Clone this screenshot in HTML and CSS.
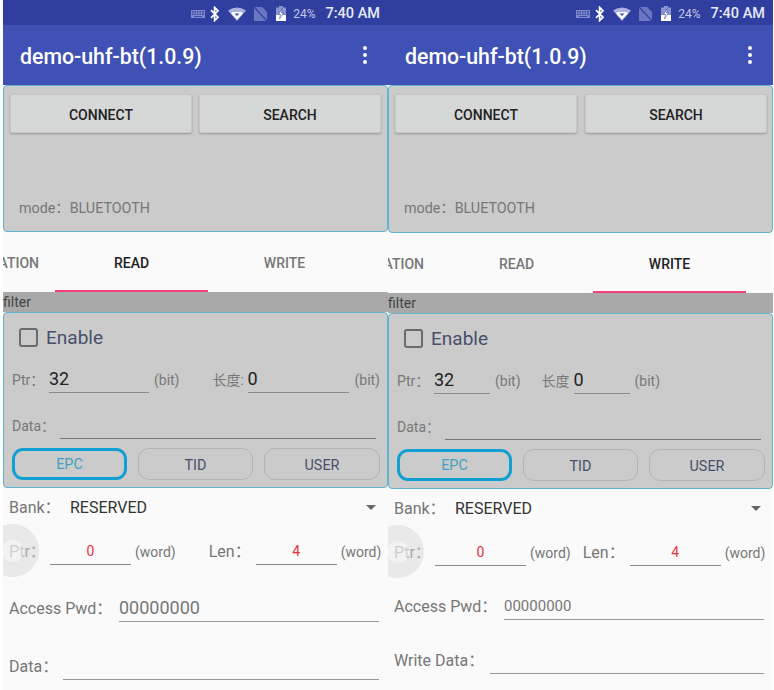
FILE: index.html
```html
<!DOCTYPE html>
<html lang="en">
<head>
  <meta charset="UTF-8" />
  <title>demo-uhf-bt</title>
  <link rel="stylesheet" href="styles.css">
</head>
<body>
  <svg class="defs" width="0" height="0">
    <symbol id="i-kb" viewBox="0 0 14 8"><path d="M0 0h14v8H0z" fill="#7f8bc9"/><path d="M1 1h1.5v1.5H1zM3.5 1H5v1.5H3.5zM6 1h1.5v1.5H6zM8.5 1H10v1.5H8.5zM11 1h2v1.5h-2zM1 3.5h1.5V5H1zM3.5 3.5H5V5H3.5zM6 3.5h1.5V5H6zM8.5 3.5H10V5H8.5zM11 3.5h2V5h-2zM3 6h8v1H3z" fill="#3c49a8"/></symbol>
    <symbol id="i-bt" viewBox="0 0 10 16"><path d="M1 4.2l7 7-3.4 3.4V1.4L8 4.8l-7 7" fill="none" stroke="#fff" stroke-width="1.7"/></symbol>
    <symbol id="i-wifi" viewBox="0 0 18 14"><path d="M0 3.5Q9-2.5 18 3.5L9 14z" fill="#a9b2e0"/><path d="M4.5 5h9l1.4 1.6L9 12.5 3.1 6.6z" fill="#fff"/><path d="M6.5 6.5h5L9 9z" fill="#3c49a8"/></symbol>
    <symbol id="i-sim" viewBox="0 0 13 14"><path d="M0 0h8l5 5v9H0z" fill="#6b77c2"/><path d="M0 0l13 14" stroke="#35429f" stroke-width="1.4"/></symbol>
    <symbol id="i-bat" viewBox="0 0 10 15"><path d="M3 0h4v1.5h3V15H0V1.5h3z" fill="#8a94d0"/><path d="M0 9h10v6H0z" fill="#fff"/><path d="M6 2.5L2.5 8.5h2L3.5 13 7.5 7h-2z" fill="#fff" stroke="#303e9f" stroke-width=".5"/></symbol>
  </svg>

  <section class="screen screen-read">
    <div class="status-bar">
      <svg class="ic-kb"><use href="#i-kb"/></svg>
      <svg class="ic-bt"><use href="#i-bt"/></svg>
      <svg class="ic-wifi"><use href="#i-wifi"/></svg>
      <svg class="ic-sim"><use href="#i-sim"/></svg>
      <svg class="ic-bat"><use href="#i-bat"/></svg>
      <span class="battery">24%</span>
      <span class="clock">7:40 AM</span>
    </div>
    <header class="app-bar">
      <h1>demo-uhf-bt(1.0.9)</h1>
      <div class="more"><i></i><i></i><i></i></div>
    </header>
    <div class="panel top-panel">
      <div class="raised-row">
        <button class="raised">CONNECT</button>
        <button class="raised">SEARCH</button>
      </div>
      <div class="mode">mode：BLUETOOTH</div>
    </div>
    <nav class="tabs">
      <div class="tab tab-cut"><span>ATION</span></div>
      <div class="tab active">READ</div>
      <div class="tab">WRITE</div>
    </nav>
    <div class="filter-title">filter</div>
    <div class="panel filter-panel">
      <label class="enable"><span class="check"></span>Enable</label>
      <div class="bit-row">
        <span class="lbl lbl-ptr">Ptr：</span>
        <span class="bit-input">32</span>
        <span class="unit">(bit)</span>
        <span class="lbl lbl-len">长度:</span>
        <span class="bit-input">0</span>
        <span class="unit">(bit)</span>
      </div>
      <div class="data-row">
        <span class="lbl">Data：</span>
        <span class="line"></span>
      </div>
      <div class="pill-row">
        <button class="pill selected">EPC</button>
        <button class="pill">TID</button>
        <button class="pill">USER</button>
      </div>
    </div>
    <div class="bank-row">
      <span class="field-lbl bank-lbl">Bank：</span>
      <span class="bank-value">RESERVED</span>
      <span class="arrow"></span>
    </div>
    <div class="word-row">
      <span class="field-lbl ptr-lbl">Ptr：</span>
      <span class="word-input">0</span>
      <span class="word-unit">(word)</span>
      <span class="field-lbl len-lbl">Len：</span>
      <span class="word-input">4</span>
      <span class="word-unit">(word)</span>
    </div>
    <div class="pwd-row">
      <span class="field-lbl">Access Pwd：</span>
      <span class="pwd-value">00000000</span>
    </div>
    <div class="last-row">
      <span class="field-lbl">Data：</span>
      <span class="line"></span>
    </div>
    <div class="ripple"><div class="ripple-core"></div></div>
  </section>

  <section class="screen screen-write">
    <div class="status-bar">
      <svg class="ic-kb"><use href="#i-kb"/></svg>
      <svg class="ic-bt"><use href="#i-bt"/></svg>
      <svg class="ic-wifi"><use href="#i-wifi"/></svg>
      <svg class="ic-sim"><use href="#i-sim"/></svg>
      <svg class="ic-bat"><use href="#i-bat"/></svg>
      <span class="battery">24%</span>
      <span class="clock">7:40 AM</span>
    </div>
    <header class="app-bar">
      <h1>demo-uhf-bt(1.0.9)</h1>
      <div class="more"><i></i><i></i><i></i></div>
    </header>
    <div class="panel top-panel">
      <div class="raised-row">
        <button class="raised">CONNECT</button>
        <button class="raised">SEARCH</button>
      </div>
      <div class="mode">mode：BLUETOOTH</div>
    </div>
    <nav class="tabs">
      <div class="tab tab-cut"><span>ATION</span></div>
      <div class="tab">READ</div>
      <div class="tab active">WRITE</div>
    </nav>
    <div class="filter-title">filter</div>
    <div class="panel filter-panel">
      <label class="enable"><span class="check"></span>Enable</label>
      <div class="bit-row">
        <span class="lbl lbl-ptr">Ptr：</span>
        <span class="bit-input">32</span>
        <span class="unit">(bit)</span>
        <span class="lbl lbl-len">长度</span>
        <span class="bit-input">0</span>
        <span class="unit">(bit)</span>
      </div>
      <div class="data-row">
        <span class="lbl">Data：</span>
        <span class="line"></span>
      </div>
      <div class="pill-row">
        <button class="pill selected">EPC</button>
        <button class="pill">TID</button>
        <button class="pill">USER</button>
      </div>
    </div>
    <div class="bank-row">
      <span class="field-lbl bank-lbl">Bank：</span>
      <span class="bank-value">RESERVED</span>
      <span class="arrow"></span>
    </div>
    <div class="word-row">
      <span class="field-lbl ptr-lbl">Ptr：</span>
      <span class="word-input">0</span>
      <span class="word-unit">(word)</span>
      <span class="field-lbl len-lbl">Len：</span>
      <span class="word-input">4</span>
      <span class="word-unit">(word)</span>
    </div>
    <div class="pwd-row">
      <span class="field-lbl">Access Pwd：</span>
      <span class="pwd-value">00000000</span>
    </div>
    <div class="last-row">
      <span class="field-lbl">Write Data：</span>
      <span class="line"></span>
    </div>
    <div class="ripple"><div class="ripple-core"></div></div>
  </section>
</body>
</html>
```

FILE: styles.css
```css
* {
  box-sizing: border-box;
}

html, body {
  height: 690px;
  overflow: hidden;
}

body {
  margin: 0;
  padding-left: 3px;
  background: #fff;
  display: flex;
  font-family: Roboto, "Noto Sans CJK SC", sans-serif;
}

.defs {
  position: absolute;
}

.screen {
  position: relative;
  width: 385px;
  height: 690px;
  overflow: hidden;
  background: #fafafa;
}

/* status + app bars */
.status-bar {
  height: 25px;
  padding: 2px 8px 0 0;
  background: #303f9f;
  display: flex;
  align-items: center;
  justify-content: flex-end;
  color: #fff;
}

.status-bar svg {
  display: block;
  flex: none;
}

.ic-kb { width: 14px; height: 8px; margin-right: 5px; }
.ic-bt { width: 10px; height: 16px; margin-right: 8px; }
.ic-wifi { width: 18px; height: 14px; margin-right: 8px; }
.ic-sim { width: 13px; height: 14px; margin-right: 9px; }
.ic-bat { width: 10px; height: 15px; margin-right: 7px; }

.battery {
  font-size: 12px;
  color: #c3c8e8;
  margin-right: 10px;
}

.clock {
  font-size: 14.5px;
  font-weight: 500;
  color: #e8eaf6;
}

.app-bar {
  height: 60px;
  padding: 2px 21px 0 17px;
  background: #3f51b5;
  display: flex;
  align-items: center;
  justify-content: space-between;
  color: #fff;
}

.app-bar h1 {
  margin: 0;
  font-size: 21.3px;
  font-weight: 500;
}

.more {
  display: flex;
  flex-direction: column;
  gap: 3px;
  margin-top: -2px;
}

.more i {
  width: 4px;
  height: 4px;
  border-radius: 50%;
  background: #fff;
}

/* grey boxes */
.panel {
  background: #cbcbcb;
  border: 1px solid #5fb4cf;
  border-radius: 4px;
}

.top-panel {
  height: 147px;
  padding: 8px 6px 0 6px;
}

.screen-write .top-panel {
  height: 148px;
  padding-right: 5px;
}

.raised-row {
  display: flex;
  gap: 7px;
}

.screen-write .raised-row {
  gap: 8px;
}

.raised {
  flex: 1;
  height: 39px;
  padding-top: 3px;
  border: 1px solid #c6c8c7;
  border-radius: 2px;
  background: #d6d7d7;
  box-shadow: 0 1px 2px rgba(0, 0, 0, 0.25);
  font: 500 14px Roboto, sans-serif;
  color: #222;
}

.mode {
  margin: 63px 0 0 9px;
  font-size: 14.3px;
  color: #777;
}

/* tabs */
.tabs {
  height: 60px;
  display: flex;
  background: #fafafa;
}

.tab {
  width: 153px;
  padding-top: 23px;
  text-align: center;
  font-size: 14px;
  font-weight: 500;
  color: #777;
}

.tab.active {
  color: #222;
  border-bottom: 2px solid #f8407f;
}

.tab-cut {
  width: 52px;
  display: flex;
  justify-content: flex-end;
  padding-right: 16px;
}

.filter-title {
  height: 20px;
  padding-top: 2px;
  background: #a9a9a9;
  font-size: 14px;
  line-height: 17px;
  color: #444;
}

.filter-panel {
  height: 176px;
  padding: 0 7px 0 8px;
}

.enable {
  height: 49px;
  display: flex;
  align-items: center;
  padding-left: 7px;
  font-size: 19px;
  color: #47506a;
}

.check {
  width: 19px;
  height: 19px;
  margin-right: 8px;
  border: 2px solid #6b6b6b;
  border-radius: 3px;
}

.bit-row {
  height: 31px;
  display: flex;
  align-items: flex-end;
}

.lbl {
  font-size: 14px;
  line-height: 20px;
  color: #777;
  padding-bottom: 3px;
  white-space: nowrap;
}

.lbl-ptr {
  width: 37px;
}

.lbl-len {
  width: 35px;
  margin-left: 33px;
}

.screen-write .lbl-len {
  width: 32px;
  margin-left: 21px;
}

.bit-input {
  width: 100px;
  height: 31px;
  border-bottom: 1px solid #8a8a8a;
  font-size: 18px;
  line-height: 33px;
  color: #222;
}

.bit-input:nth-of-type(5) {
  width: 102px;
}

.screen-write .bit-input {
  width: 56px;
}

.unit {
  margin-left: 5px;
  padding-bottom: 3px;
  font-size: 14px;
  line-height: 20px;
  color: #777;
}

.data-row {
  height: 46px;
  display: flex;
  align-items: flex-end;
}

.data-row .lbl {
  width: 48px;
  padding-bottom: 3px;
}

.line {
  flex: 1;
  height: 1px;
  background: #777;
}

.data-row .line {
  margin-right: 4px;
}

.pill-row {
  display: flex;
  gap: 11px;
  margin-top: 9px;
}

.pill {
  width: 115px;
  height: 32px;
  padding-top: 3px;
  border: 1px solid #b4b4b4;
  border-radius: 11px;
  background: transparent;
  font: 14.4px Roboto, sans-serif;
  color: #47506a;
}

.pill:last-child {
  width: 116px;
}

.pill.selected {
  border: 3px solid #0f9fd2;
  padding-top: 1px;
  color: #3fa3bd;
}

/* fields under the filter box */
.field-lbl {
  font-size: 16px;
  line-height: 20px;
  color: #777;
  white-space: nowrap;
}

.bank-row {
  height: 39px;
  display: flex;
  align-items: center;
  padding: 0 12px 0 6px;
}

.bank-lbl {
  width: 61px;
}

.bank-value {
  flex: 1;
  font-size: 16px;
  color: #333;
}

.arrow {
  border-left: 5px solid transparent;
  border-right: 5px solid transparent;
  border-top: 5px solid #666;
}

.word-row {
  height: 38px;
  display: flex;
  align-items: flex-end;
  padding-left: 6px;
}

.ptr-lbl,
.len-lbl {
  padding-bottom: 3px;
}

.ptr-lbl {
  width: 41px;
}

.len-lbl {
  width: 47px;
  margin-left: 33px;
}

.word-input {
  width: 81px;
  height: 26px;
  border-bottom: 1px solid #888;
  text-align: center;
  font-size: 14px;
  line-height: 24px;
  color: #e8343a;
}

.word-unit {
  margin-left: 4px;
  padding-bottom: 3px;
  font-size: 14px;
  line-height: 20px;
  color: #777;
}

.screen-write .word-input {
  width: 91px;
}

.screen-write .len-lbl {
  margin-left: 12px;
}

.pwd-row {
  height: 57px;
  display: flex;
  align-items: flex-end;
  padding: 0 9px 0 6px;
}

.pwd-row .field-lbl {
  width: 110px;
  padding-bottom: 3px;
}

.screen-write .pwd-row {
  height: 54px;
}

.pwd-value {
  flex: 1;
  height: 30px;
  border-bottom: 1px solid #999;
  font-size: 18px;
  line-height: 32px;
  color: #777;
}

.screen-write .pwd-value {
  font-size: 15px;
  line-height: 32px;
}

.last-row {
  height: 58px;
  display: flex;
  align-items: flex-end;
  padding: 0 9px 0 6px;
}

.last-row .field-lbl {
  width: 54px;
  padding-bottom: 3px;
}

.screen-write .last-row {
  height: 54px;
}

.screen-write .last-row .field-lbl {
  width: 96px;
}

.last-row .line {
  background: #999;
}

/* the touch ripple lies over the Ptr label */
.ripple {
  position: absolute;
  left: -17px;
  top: 524px;
  width: 53px;
  height: 53px;
  border-radius: 50%;
  background: rgba(215, 215, 215, 0.5);
  display: flex;
  align-items: center;
  justify-content: center;
}

.screen-write .ripple {
  top: 525px;
}

.ripple-core {
  width: 22px;
  height: 22px;
  border-radius: 50%;
  background: rgba(255, 255, 255, 0.45);
}
```
